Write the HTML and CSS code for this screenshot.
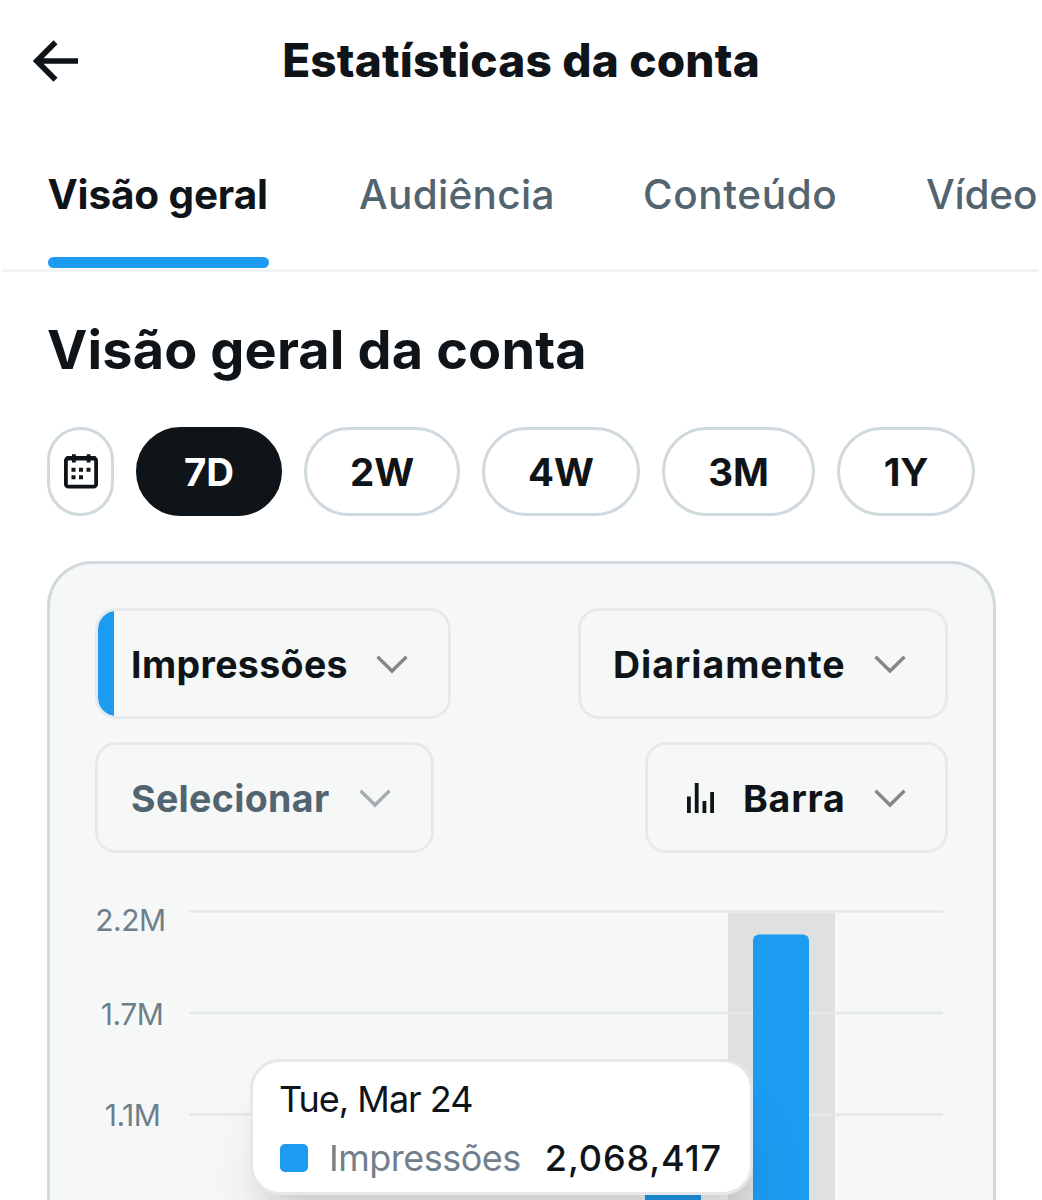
FILE: index.html
```html
<!DOCTYPE html>
<html lang="pt">
<head>
    <meta charset="utf-8">
    <title>Estatísticas da conta</title>
    <link rel="stylesheet" href="styles.css">
</head>
<body>
    <div class="header">
        <svg class="back" viewBox="0 0 48 44" fill="none" stroke="#0f1419" stroke-width="5.7">
            <path d="M24.5 3.2L5.8 22l18.7 18.8M5 22h42"/>
        </svg>
        <div class="title">Estatísticas da conta</div>
    </div>

    <div class="tabs">
        <div class="tab active"><span>Visão geral</span></div>
        <div class="tab t2"><span>Audiência</span></div>
        <div class="tab t3"><span>Conteúdo</span></div>
        <div class="tab t4"><span>Vídeo</span></div>
    </div>

    <div class="content">
        <h1>Visão geral da conta</h1>

        <div class="ranges">
            <button class="range calendar">
                <svg viewBox="0 0 34 36">
                    <rect x="1.9" y="4" width="30.2" height="28.7" rx="2.5" fill="none" stroke="#0f1419" stroke-width="3.8"/>
                    <path d="M2 2.5h30v4H2zM8 .3h3.8V8.5H8zM22.7.3h3.8V8.5h-3.8z" fill="#0f1419"/>
                    <path d="M7.5 13.8h4v4h-4zM15 13.8h4v4h-4zM22.5 13.8h4v4h-4zM7.5 21.3h4v4h-4zM15 21.3h4v4h-4z" fill="#0f1419"/>
                </svg>
            </button>
            <button class="range r7d selected">7D</button>
            <button class="range r2w">2W</button>
            <button class="range r4w">4W</button>
            <button class="range r3m">3M</button>
            <button class="range r1y">1Y</button>
        </div>

        <div class="card">
            <div class="filters">
                <button class="select metric">
                    <span>Impressões</span>
                    <svg class="chevron" viewBox="0 0 32 19"><path d="M1.5 1.8L16 16 30.5 1.8"/></svg>
                </button>
                <button class="select period">
                    <span>Diariamente</span>
                    <svg class="chevron" viewBox="0 0 32 19"><path d="M1.5 1.8L16 16 30.5 1.8"/></svg>
                </button>
            </div>
            <div class="filters">
                <button class="select empty">
                    <span>Selecionar</span>
                    <svg class="chevron" viewBox="0 0 32 19"><path d="M1.5 1.8L16 16 30.5 1.8"/></svg>
                </button>
                <button class="select kind">
                    <svg class="bars" viewBox="0 0 28 30"><path d="M1.9 13.5V30M9.7 0v30M17.4 18v12M25.1 9v21"/></svg>
                    <span>Barra</span>
                    <svg class="chevron" viewBox="0 0 32 19"><path d="M1.5 1.8L16 16 30.5 1.8"/></svg>
                </button>
            </div>

            <div class="chart">
                <svg class="plot" width="853" height="320" viewBox="0 0 853 320">
                    <!-- y axis -->
                    <g class="axis">
                        <text x="35.5" y="51">2.2M</text>
                        <text x="37" y="145">1.7M</text>
                        <text x="37.5" y="246">1.1M</text>
                    </g>
                    <!-- hovered day -->
                    <rect x="633" y="32.5" width="107" height="288" fill="#dfe1e1"/>
                    <path class="grid" d="M94.5 31.5H848M94.5 133H848M94.5 234.7H848"/>
                    <path class="bar" d="M658 320V60.5a6 6 0 0 1 6-6h44a6 6 0 0 1 6 6V320z"/>
                    <path class="bar" d="M550 320v-5h56v5z"/>
                </svg>
                <div class="tooltip">
                    <div class="date">Tue, Mar 24</div>
                    <div class="row">
                        <i class="swatch"></i>
                        <span class="name">Impressões</span>
                        <span class="value">2,068,417</span>
                    </div>
                </div>
            </div>
        </div>
    </div>
</body>
</html>
```
FILE: styles.css
```css
* {
    box-sizing: border-box;
}
body {
    font-family: Inter, "Liberation Sans", sans-serif;
    margin: 0;
    height: 1200px;
    overflow: hidden;
    background: #fff;
    color: #0f1419;
}
.header {
    display: grid;
    grid-template-columns: 110px 1fr 110px;
    align-items: center;
    height: 121px;
}
.back {
    width: 48px;
    height: 44px;
    margin-left: 31px;
}
.title {
    font-size: 46px;
    font-weight: 800;
    letter-spacing: .15px;
    text-align: center;
    white-space: nowrap;
    padding-bottom: 2px;
}
.tabs {
    display: flex;
    gap: 90px;
    height: 151px;
    margin: 0 3px;
    padding-left: 44.5px;
    border-bottom: 3px solid #eff3f4;
    overflow: hidden;
}
.tab {
    flex: none;
    display: flex;
    flex-direction: column;
    justify-content: space-between;
    height: 148px;
    padding-top: 49px;
    font-size: 40.5px;
    line-height: 50px;
    font-weight: 500;
    letter-spacing: .3px;
    color: #536471;
    white-space: nowrap;
}
.tab.active {
    width: 221.5px;
    font-weight: 700;
    letter-spacing: -.15px;
    color: #0f1419;
}
.tab.active::after {
    content: "";
    height: 11px;
    margin-bottom: 1px;
    border-radius: 6px;
    background: #1d9bf0;
}
.t2 {
    width: 194px;
}
.t3 {
    width: 193px;
    letter-spacing: .6px;
}
.t4 {
    letter-spacing: -.2px;
}
.content {
    padding: 0 47px;
}
h1 {
    margin: 44px 0 43px;
    font-size: 54px;
    line-height: 68px;
    font-weight: 700;
    letter-spacing: .15px;
}
.ranges {
    display: flex;
    gap: 22px;
}
button {
    font-family: inherit;
    color: inherit;
    padding: 0;
    background: none;
}
.range {
    height: 89px;
    border: 3px solid #cfd9de;
    border-radius: 45px;
    font-size: 38.5px;
    font-weight: 700;
}
.range.selected {
    background: #0f1419;
    border-color: #0f1419;
    color: #fff;
}
.calendar {
    width: 67px;
}
.calendar svg {
    display: block;
    width: 34px;
    height: 36px;
    margin: 0 auto;
}
.r7d {
    width: 146px;
}
.r2w {
    width: 156px;
}
.r4w {
    width: 158px;
}
.r3m {
    width: 153px;
}
.r1y {
    width: 138px;
}
.card {
    width: 949px;
    height: 639px;
    margin-top: 45px;
    padding: 44px 45px 0;
    border: 3px solid #cfd9de;
    border-bottom: none;
    border-radius: 45px 45px 0 0;
    background: #f5f8f7;
    overflow: hidden;
}
.filters {
    display: flex;
    justify-content: space-between;
    margin-bottom: 23px;
}
.select {
    display: flex;
    align-items: center;
    height: 111px;
    padding: 0 40px 0 33px;
    border: 3px solid #e7e9ec;
    border-radius: 21px;
    font-size: 37.5px;
    font-weight: 700;
    letter-spacing: .35px;
}
.select span {
    padding-top: 1px;
}
.metric {
    width: 356px;
    background: linear-gradient(to right, #1d9bf0 16px, transparent 16px) no-repeat padding-box;
}
.period {
    width: 370px;
    padding: 0 39px 0 32px;
    letter-spacing: .95px;
}
.empty {
    width: 339px;
    color: #536471;
}
.kind {
    width: 303px;
    padding-right: 39px;
    letter-spacing: .8px;
}
.chevron {
    width: 32px;
    height: 19px;
    margin-top: 2px;
    margin-left: auto;
    fill: none;
    stroke: #858789;
    stroke-width: 3.4;
}
.empty .chevron {
    stroke: #a5adb3;
}
.bars {
    width: 28px;
    height: 30px;
    margin: 0 28px 0 6px;
    fill: none;
    stroke: #0f1419;
    stroke-width: 3.8;
}
.chart {
    position: relative;
    margin-top: 27px;
}
.plot {
    display: block;
}
.axis {
    font-size: 30px;
    letter-spacing: -.5px;
    fill: #6e7f8b;
    text-anchor: middle;
}
.grid {
    stroke: #e5e7eb;
    stroke-width: 2.7;
}
.bar {
    fill: #1d9bf0;
}
.tooltip {
    position: absolute;
    left: 155px;
    top: 179px;
    width: 503px;
    height: 136px;
    padding: 13px 27px;
    border: 3px solid #e5e7eb;
    border-radius: 30px;
    background: #fff;
    box-shadow: 0 53px 67px -13px rgba(0, 0, 0, .1), 0 21px 27px -14px rgba(0, 0, 0, .11);
    font-size: 36px;
    line-height: 48px;
    white-space: nowrap;
}
.date {
    margin-left: -1px;
    letter-spacing: -1px;
}
.row {
    display: flex;
    align-items: center;
    margin-top: 11px;
}
.swatch {
    width: 28px;
    height: 28px;
    border-radius: 5px;
    background: #1d9bf0;
}
.name {
    margin-left: 21px;
    letter-spacing: -.5px;
    color: #71808c;
}
.value {
    margin-left: auto;
    margin-right: 1px;
    font-weight: 500;
    letter-spacing: .9px;
}
```
